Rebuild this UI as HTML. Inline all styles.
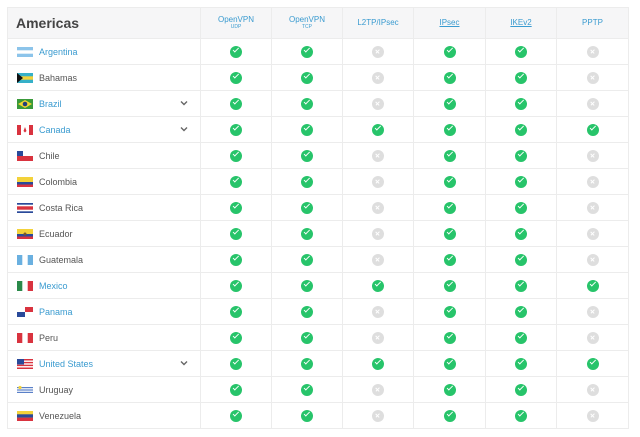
<!DOCTYPE html>
<html><head><style>
body{margin:0;background:#fff;font-family:"Liberation Sans",sans-serif;}
table{position:absolute;left:7px;top:7px;border-collapse:collapse;table-layout:fixed;width:621px;}
td,th{border:1px solid #ececec;padding:0;}
th{height:30px;background:#f6f6f7;font-weight:normal;color:#3a9bd0;font-size:8px;text-align:center;line-height:8px;}
th.h{text-align:left;padding-left:8px;font-size:14px;font-weight:bold;color:#444;}
th small{display:block;font-size:5px;line-height:6px;}
th.g{color:#777;}
th u{text-decoration:underline;}
td{height:25px;text-align:center;font-size:9px;color:#555;}
td.c{text-align:left;position:relative;padding-left:31px;}
td.c.l{color:#3a9bd0;}
.f{position:absolute;left:9px;top:8px;width:16px;height:10px;}
.ch{position:absolute;left:172px;top:8px;width:8px;height:8px;}
.y,.n{display:inline-block;width:12px;height:12px;border-radius:50%;vertical-align:middle;position:relative;}
.y{background:#27c46a;}
.y:after{content:"";position:absolute;left:3.3px;top:2.8px;width:4.5px;height:2.2px;border-left:1.7px solid #fff;border-bottom:1.7px solid #fff;transform:rotate(-45deg);}
.n{background:#dedede;}
.n:before,.n:after{content:"";position:absolute;left:5.4px;top:3.3px;width:1.3px;height:5.4px;background:#fff;transform:rotate(45deg);}
.n:after{transform:rotate(-45deg);}
</style></head><body>
<table>
<colgroup><col style="width:193px"><col style="width:71px"><col style="width:71px"><col style="width:71px"><col style="width:72px"><col style="width:71px"><col style="width:72px"></colgroup>
<tr><th class="h">Americas</th><th>OpenVPN<small>UDP</small></th><th>OpenVPN<small>TCP</small></th><th>L2TP/IPsec</th><th><u>IPsec</u></th><th><u>IKEv2</u></th><th>PPTP</th></tr>
<tr><td class="c l"><svg class="f"><rect width="16" height="10" fill="#8cc4ea"/><rect y="3.3" width="16" height="3.4" fill="#fff"/></svg>Argentina</td><td><i class="y"></i></td><td><i class="y"></i></td><td><i class="n"></i></td><td><i class="y"></i></td><td><i class="y"></i></td><td><i class="n"></i></td></tr>
<tr><td class="c"><svg class="f"><rect width="16" height="10" fill="#35b0c8"/><rect y="3.3" width="16" height="3.4" fill="#f3d23a"/><path d="M0 0L6 5L0 10z" fill="#111"/></svg>Bahamas</td><td><i class="y"></i></td><td><i class="y"></i></td><td><i class="n"></i></td><td><i class="y"></i></td><td><i class="y"></i></td><td><i class="n"></i></td></tr>
<tr><td class="c l"><svg class="f"><rect width="16" height="10" fill="#3a9a3a"/><path d="M8 1L15 5L8 9L1 5z" fill="#f2d530"/><circle cx="8" cy="5" r="2.3" fill="#23407a"/></svg>Brazil<svg class="ch"><path d="M1 2.5L4 5.5L7 2.5" stroke="#666" stroke-width="1.4" fill="none"/></svg></td><td><i class="y"></i></td><td><i class="y"></i></td><td><i class="n"></i></td><td><i class="y"></i></td><td><i class="y"></i></td><td><i class="n"></i></td></tr>
<tr><td class="c l"><svg class="f"><rect width="16" height="10" fill="#fff"/><rect width="4" height="10" fill="#d9333f"/><rect x="12" width="4" height="10" fill="#d9333f"/><path d="M8 2L9.5 6L8 7.5L6.5 6z" fill="#d9333f"/></svg>Canada<svg class="ch"><path d="M1 2.5L4 5.5L7 2.5" stroke="#666" stroke-width="1.4" fill="none"/></svg></td><td><i class="y"></i></td><td><i class="y"></i></td><td><i class="y"></i></td><td><i class="y"></i></td><td><i class="y"></i></td><td><i class="y"></i></td></tr>
<tr><td class="c"><svg class="f"><rect width="16" height="10" fill="#d9333f"/><rect width="16" height="5" fill="#fff"/><rect width="6" height="5" fill="#2a4a9a"/></svg>Chile</td><td><i class="y"></i></td><td><i class="y"></i></td><td><i class="n"></i></td><td><i class="y"></i></td><td><i class="y"></i></td><td><i class="n"></i></td></tr>
<tr><td class="c"><svg class="f"><rect width="16" height="10" fill="#f3d23a"/><rect y="5" width="16" height="2.5" fill="#2a4a9a"/><rect y="7.5" width="16" height="2.5" fill="#d9333f"/></svg>Colombia</td><td><i class="y"></i></td><td><i class="y"></i></td><td><i class="n"></i></td><td><i class="y"></i></td><td><i class="y"></i></td><td><i class="n"></i></td></tr>
<tr><td class="c"><svg class="f"><rect width="16" height="10" fill="#2a4a9a"/><rect y="1.7" width="16" height="6.6" fill="#fff"/><rect y="3.3" width="16" height="3.4" fill="#d9333f"/></svg>Costa Rica</td><td><i class="y"></i></td><td><i class="y"></i></td><td><i class="n"></i></td><td><i class="y"></i></td><td><i class="y"></i></td><td><i class="n"></i></td></tr>
<tr><td class="c"><svg class="f"><rect width="16" height="10" fill="#f3d23a"/><rect y="5" width="16" height="2.5" fill="#2a4a9a"/><rect y="7.5" width="16" height="2.5" fill="#d9333f"/><circle cx="8" cy="5" r="1.5" fill="#7a5a2a"/></svg>Ecuador</td><td><i class="y"></i></td><td><i class="y"></i></td><td><i class="n"></i></td><td><i class="y"></i></td><td><i class="y"></i></td><td><i class="n"></i></td></tr>
<tr><td class="c"><svg class="f"><rect width="16" height="10" fill="#6ab0e0"/><rect x="5.3" width="5.4" height="10" fill="#fff"/></svg>Guatemala</td><td><i class="y"></i></td><td><i class="y"></i></td><td><i class="n"></i></td><td><i class="y"></i></td><td><i class="y"></i></td><td><i class="n"></i></td></tr>
<tr><td class="c l"><svg class="f"><rect width="16" height="10" fill="#fff"/><rect width="5.3" height="10" fill="#2a8a4a"/><rect x="10.7" width="5.3" height="10" fill="#d9333f"/></svg>Mexico</td><td><i class="y"></i></td><td><i class="y"></i></td><td><i class="y"></i></td><td><i class="y"></i></td><td><i class="y"></i></td><td><i class="y"></i></td></tr>
<tr><td class="c l"><svg class="f"><rect width="16" height="10" fill="#fff"/><rect x="8" width="8" height="5" fill="#d9333f"/><rect y="5" width="8" height="5" fill="#2a4a9a"/></svg>Panama</td><td><i class="y"></i></td><td><i class="y"></i></td><td><i class="n"></i></td><td><i class="y"></i></td><td><i class="y"></i></td><td><i class="n"></i></td></tr>
<tr><td class="c"><svg class="f"><rect width="16" height="10" fill="#fff"/><rect width="5.3" height="10" fill="#d9333f"/><rect x="10.7" width="5.3" height="10" fill="#d9333f"/></svg>Peru</td><td><i class="y"></i></td><td><i class="y"></i></td><td><i class="n"></i></td><td><i class="y"></i></td><td><i class="y"></i></td><td><i class="n"></i></td></tr>
<tr><td class="c l"><svg class="f"><rect width="16" height="10" fill="#d9333f"/><rect y="1.5" width="16" height="1.4" fill="#fff"/><rect y="4.3" width="16" height="1.4" fill="#fff"/><rect y="7.1" width="16" height="1.4" fill="#fff"/><rect width="7" height="5.5" fill="#2a4a9a"/></svg>United States<svg class="ch"><path d="M1 2.5L4 5.5L7 2.5" stroke="#666" stroke-width="1.4" fill="none"/></svg></td><td><i class="y"></i></td><td><i class="y"></i></td><td><i class="y"></i></td><td><i class="y"></i></td><td><i class="y"></i></td><td><i class="y"></i></td></tr>
<tr><td class="c"><svg class="f"><rect width="16" height="10" fill="#fff"/><rect y="2" width="16" height="1.2" fill="#5a80c8"/><rect y="4.4" width="16" height="1.2" fill="#5a80c8"/><rect y="6.8" width="16" height="1.2" fill="#5a80c8"/><circle cx="3" cy="2.5" r="1.6" fill="#f3d23a"/></svg>Uruguay</td><td><i class="y"></i></td><td><i class="y"></i></td><td><i class="n"></i></td><td><i class="y"></i></td><td><i class="y"></i></td><td><i class="n"></i></td></tr>
<tr><td class="c"><svg class="f"><rect width="16" height="10" fill="#f3d23a"/><rect y="3.3" width="16" height="3.4" fill="#2a4a9a"/><rect y="6.7" width="16" height="3.3" fill="#d9333f"/></svg>Venezuela</td><td><i class="y"></i></td><td><i class="y"></i></td><td><i class="n"></i></td><td><i class="y"></i></td><td><i class="y"></i></td><td><i class="n"></i></td></tr>
</table>
</body></html>
